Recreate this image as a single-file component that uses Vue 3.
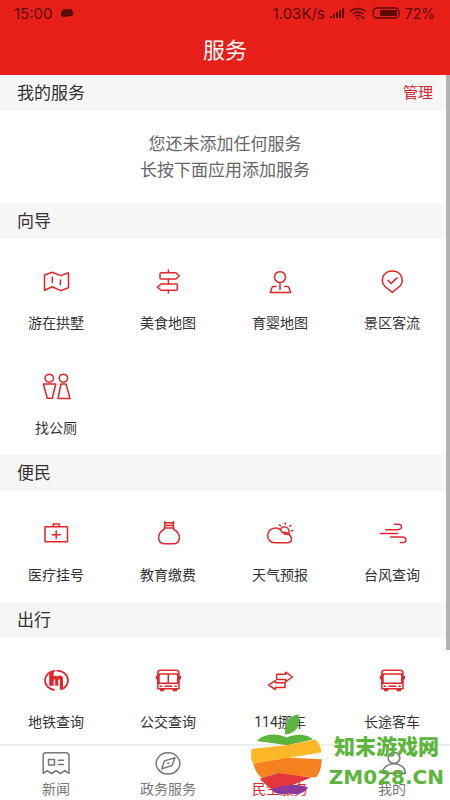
<script setup>
import { ref } from 'vue';

const pageTitle = '服务';

// 服务分组
const sections = [
  {
    title: '向导',
    items: [
      { name: '游在拱墅', icon: 'map' },
      { name: '美食地图', icon: 'sign' },
      { name: '育婴地图', icon: 'baby' },
      { name: '景区客流', icon: 'spot' },
      { name: '找公厕', icon: 'toilet' },
    ],
  },
  {
    title: '便民',
    items: [
      { name: '医疗挂号', icon: 'medical' },
      { name: '教育缴费', icon: 'bag' },
      { name: '天气预报', icon: 'weather' },
      { name: '台风查询', icon: 'wind' },
    ],
  },
  {
    title: '出行',
    items: [
      { name: '地铁查询', icon: 'metro' },
      { name: '公交查询', icon: 'bus' },
      { name: '114挪车', icon: 'move' },
      { name: '长途客车', icon: 'coach' },
    ],
  },
];

// 图标：描边路径 + 可选的填充路径
const icons = {
  map: { line: 'M3.5 8 11.3 5.3 19.8 8.6 27.5 5.7V20.8L19.7 23.6 11.3 19.8 3.5 23.3ZM11.3 10.3v5.2M19.4 13v4.8' },
  sign: { line: 'M8 5.7H23L26.3 8.8 23 12H8Q7 12 7 11V6.7Q7 5.7 8 5.7ZM23.3 17H8L4.5 20.2 8 23.3H23.3Q24.3 23.3 24.3 22.3V18Q24.3 17 23.3 17ZM15.4 3v2.7M15.4 12v5M15.4 23.3V26' },
  baby: { line: 'M15 4.8a5.6 5.4 0 1 0 .01 0ZM15 15.8v6.7M11 19.6H8.6Q7.2 19.6 6.8 21L5.3 25.4H25.7L24.1 21Q23.7 19.6 22.3 19.6H19.8' },
  spot: { line: 'M15.3 25.3 8 19.5C2.3 13 6.5 4 15.3 4S28.2 13 22.6 19.5ZM11 13.5 14.2 16.4 20 10.9' },
  toilet: { line: 'M8.3 2.2a4.3 4 0 1 0 .01 0ZM22.4 2.2a4.3 4 0 1 0 .01 0ZM2.4 12H14.8L11.2 26.3H6.3ZM20 12h5L29 26.5H17Z' },
  medical: { line: 'M4 7.7H26.5V22.7H4ZM12.3 7.5V5h6v2.5M15.2 12v7.6M11.2 15.7H19.3' },
  bag: { line: 'M12 6.5 11.5 3 14 4.2 16 3.6 18.2 4.2 20.7 3 20.2 6.5ZM11.5 9H20.8M12 6.5 11 10.5C3.8 14 3.7 24.8 12 24.8H20.2C28.3 24.8 28 14 21 10.5L20.2 6.5' },
  weather: { line: 'M10 23.7C0 23.7.5 9 10.5 9Q15 9 17.3 13.5C25 11.5 31 23.7 22.2 23.7ZM15.5 10.3C18 5.5 25 8 24 14.5M20.3 5.2V4M15.5 6.7 14.5 5.7M24.7 7.3 25.9 6.2M26.3 11.8H27.8M18 13.5Q20.5 17 24 14.5' },
  wind: { line: 'M8.7 10.7H19.5C25.8 10.7 26 5.3 20.8 5.3H17.5M3.3 14.4H20.5M13.7 18H25C30.5 18 30 23.5 25.5 23.5H23.3' },
  metro: {
    line: 'M14.3 4.7A11 9.7 0 0 0 13.5 24M15.6 4.7A11 9.7 0 0 1 19.8 23.5',
    fill: 'M9.5 6 12.7 5V10.4Q14.5 9.2 16.3 10.6 18.2 9.2 20.3 9.7 22 10.2 22 12.5V22L18.8 23.7V13.5H17.2V19.7H14.2V13.5H12.7V19.7H8.2V8Z',
  },
  bus: {
    line: 'M7.5 4.2H23.2Q26 4.2 26 7V22.8H4.8V7Q4.8 4.2 7.5 4.2ZM6 8H24.8V17.3H6ZM15.3 8v9.3M12 20.2h6.8M7 20.2h1.5M22 20.2h1.5',
    fill: 'M2.8 10h2v4l-2-1ZM26 10h2v3l-2 1ZM7 23h4.3v2.2H7ZM19.6 23H24v2.2h-4.4Z',
  },
  coach: {
    line: 'M7.5 4.2H23.2Q26 4.2 26 7V22.8H4.8V7Q4.8 4.2 7.5 4.2ZM6 8H24.8V17.3H6ZM12 20.2h6.8M7 20.2h1.5M22 20.2h1.5',
    fill: 'M2.8 10h2v4l-2-1ZM26 10h2v3l-2 1ZM7 23h4.3v2.2H7ZM19.6 23H24v2.2h-4.4Z',
  },
  move: { line: 'M11.7 8.3H20.7V6.2L27.5 11 20.7 15.7V13.4H11.7ZM20 16.8H10.5V14.7L3.5 19.1 10.5 23.5V21.4H20Z' },
};

// 底部导航
const tabs = [
  { name: '新闻', line: 'M5 3.7H25Q28 3.7 28 6.7V24.3L23.8 21.7 19.4 24.5 15 21.7 10.6 24.5 6.2 21.7 2.2 24.3V6.7Q2.2 3.7 5 3.7ZM7.5 10.5h6v5.5h-6ZM17.3 11.2h5.2M17.3 15.5h5.2' },
  { name: '政务服务', line: 'M15 3.7a11.8 10.7 0 1 0 .01 0ZM22 8.8 19 16.5 8.7 19.9 11.4 11.9ZM14.8 14.3h1' },
  { name: '民生服务', line: 'M10 8H20V20H10Z' },
  { name: '我的', line: 'M17 3.5a5.8 5.5 0 1 0 .01 0ZM5.5 24.3C6.2 11.5 27.8 11.5 28.5 24.3Z' },
];
const activeTab = ref(2);
</script>

<template>
  <div class="service-page">

    <header class="page-header">
      <div class="status-bar">
        <span>15:00</span>
        <svg class="android" viewBox="0 0 14 10" width="14" height="10" aria-hidden="true">
          <path d="M1 4 3 2 2.500 1 4 1.500Q7 .5 10 1.500L12 .5 11.500 2Q14 4 13 7 12 8.500 9 8L6 9Q1 9 1 7Z" />
        </svg>
        <span class="spacer"></span>
        <span>1.03K/s</span>
        <svg viewBox="0 0 14 12" width="14" height="12" aria-hidden="true">
          <path d="M0 9h2v2H0ZM3 7h2v4H3ZM6 5h2v6H6ZM9 3h2v8H9ZM12 1h2v10h-2Z" />
        </svg>
        <svg class="wifi" viewBox="0 0 18 13" width="18" height="13" aria-hidden="true">
          <path d="M1 4.500Q9-1.500 17 4.500M3.500 7Q9 3 14.500 7M6 9.300Q9 7.300 12 9.300M8 11.500h2M14 9v3M12.800 10.800h3" />
        </svg>
        <svg viewBox="0 0 28 12" width="28" height="12" aria-hidden="true">
          <rect x="1" y="1" width="26" height="10" rx="4" class="battery-case" />
          <rect x="8" y="3" width="17" height="6" rx="1" />
        </svg>
        <span class="battery-text">72%</span>
      </div>
      <h1>{{ pageTitle }}</h1>
    </header>

    <main class="content">
      <div class="section-bar">
        <h2>我的服务</h2>
        <button class="manage-btn">管理</button>
      </div>
      <div class="empty-tip">
        <p>您还未添加任何服务</p>
        <p>长按下面应用添加服务</p>
      </div>

      <section v-for="section in sections" :key="section.title">
        <div class="section-bar">
          <h2>{{ section.title }}</h2>
        </div>
        <div class="service-grid">
          <button v-for="item in section.items" :key="item.name" class="service-item">
            <svg viewBox="0 0 30 30" width="30" height="30" aria-hidden="true">
              <path class="line" :class="{ bold: item.icon === 'metro' }" :d="icons[item.icon].line" />
              <path v-if="icons[item.icon].fill" class="fill" :d="icons[item.icon].fill" />
            </svg>
            <span>{{ item.name }}</span>
          </button>
        </div>
      </section>

      <div class="scroll-thumb"></div>
    </main>

    <nav class="tab-bar">
      <button
        v-for="(tab, index) in tabs"
        :key="tab.name"
        class="tab-item"
        :class="{ active: index === activeTab }"
        @click="activeTab = index"
      >
        <svg viewBox="0 0 30 30" width="30" height="30" aria-hidden="true">
          <path class="line" :d="tab.line" />
        </svg>
        <span>{{ tab.name }}</span>
      </button>
    </nav>

    <!-- 水印 -->
    <div class="watermark">
      <svg viewBox="15 8 220 246" width="73" height="82" aria-hidden="true">
        <path fill="#5cb53c" d="M121 72C118 40 130 18 160 11 170 40 158 68 121 72Z" />
        <path fill="#5cb53c" d="M36 92C55 70 92 66 126 81 155 68 190 72 204 87L128 105Z" />
        <path fill="#fcb827" d="M20 116 130 104 212 87C223 97 229 110 231 126L130 143 24 160C17 146 17 130 20 116Z" />
        <path fill="#f5821f" d="M24 160 130 142 231 147C231 170 226 187 214 202L140 196 96 188Z" />
        <path fill="#f5821f" d="M24 160 98 187 52 205C38 193 30 178 24 160Z" />
        <path fill="#e4373c" d="M44 206 98 188 200 202 96 243 76 235Z" />
        <path fill="#8e3a9b" d="M78 237C115 222 160 218 190 232 180 248 160 256 138 249 118 255 100 252 88 246Z" />
      </svg>
      <div class="watermark-text">
        <span class="cn">知末游戏网</span>
        <span class="en">ZM028.CN</span>
      </div>
    </div>

  </div>
</template>

<style>
body { margin: 0; background: #fff; }
</style>

<style scoped>
/* --- 基本布局 --- */
.service-page {
  height: 100vh;
  display: flex;
  flex-direction: column;
  position: relative;
  overflow: hidden;
  font-family: Roboto, "Noto Sans CJK SC", sans-serif;
  color: #333;
  background: #fff;
}
h1, h2, p { margin: 0; font-weight: 400; }
button { border: none; background: none; padding: 0; font-family: inherit; color: inherit; cursor: pointer; }
.line { fill: none; stroke: currentColor; stroke-width: 1.5; stroke-linecap: round; stroke-linejoin: round; }
.line.bold { stroke-width: 1.8; stroke-linecap: butt; }
.fill { fill: currentColor; }

/* --- 顶部 --- */
.page-header { flex: none; height: 75px; background: #e81f18; }
.status-bar {
  display: flex; align-items: center; gap: 5px;
  height: 26px; padding: 0 15px 0 14px;
  font-family: Inter, sans-serif; font-size: 15px; color: #5b0b08;
}
.status-bar svg { fill: currentColor; }
.status-bar .android { margin-left: 3px; }
.status-bar .spacer { flex: 1; }
.status-bar .wifi { fill: none; stroke: currentColor; stroke-width: 1.4; }
.status-bar .battery-text { font-size: 14px; }
.battery-case { fill: none; stroke: currentColor; stroke-width: 1.3; }
h1 { text-align: center; font-size: 22px; line-height: 50px; color: #fff; }

/* --- 内容 --- */
.content { flex: 1; min-height: 0; position: relative; overflow: hidden; }
.section-bar {
  display: flex; align-items: center; justify-content: space-between;
  height: 36px; padding: 0 17px; background: #f6f6f6;
}
.section-bar h2 { font-size: 17px; line-height: 36px; }
.manage-btn { font-size: 15px; line-height: 36px; color: #d8232a; }
.empty-tip { padding: 20px 0; text-align: center; font-size: 17px; line-height: 26px; color: #666; }
.service-grid {
  display: grid;
  grid-template-columns: repeat(4, 1fr);
  padding: 2px 2px 4px 0;
}
.service-item {
  display: flex; flex-direction: column; align-items: center; gap: 16px;
  height: 105px; padding-top: 26px;
}
.service-item svg { color: #e0262b; }
.service-item span { font-size: 14px; line-height: 20px; }
.scroll-thumb { position: absolute; top: 0; right: 0; width: 4px; height: 86%; background: #b3b3b3; }

/* --- 底部导航 --- */
.tab-bar {
  flex: none; display: grid; grid-template-columns: repeat(4, 1fr);
  height: 54px; padding-right: 2px; border-top: 2px solid #eee; background: #fff;
}
.tab-item { display: flex; flex-direction: column; align-items: center; padding-top: 3px; color: #777; }
.tab-item span { font-size: 14px; line-height: 20px; }
.tab-item.active { color: #e0262b; }

/* --- 水印 --- */
.watermark {
  position: absolute; right: 6px; bottom: 5px;
  display: flex; align-items: center; gap: 6px;
  pointer-events: none; color: #5cb53c;
}
.watermark-text { display: flex; flex-direction: column; align-items: center; gap: 6px; padding-top: 16px; }
.watermark-text .cn { font-size: 21px; line-height: 24px; font-weight: 900; }
.watermark-text .en { font-family: "DejaVu Sans", sans-serif; font-size: 20px; line-height: 24px; font-weight: 700; }
</style>
